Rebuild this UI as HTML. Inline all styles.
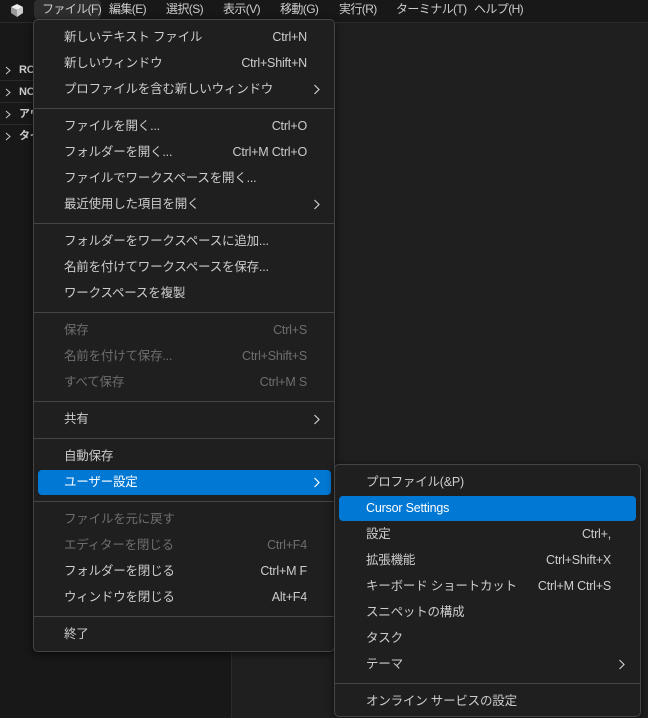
<!DOCTYPE html>
<html><head><meta charset="utf-8"><style>
*{margin:0;padding:0;box-sizing:border-box}
body{width:648px;height:718px;overflow:hidden;background:#1f1f1f;font-family:"Liberation Sans","Noto Sans CJK JP",sans-serif;font-size:12.5px;color:#ccc;position:relative;letter-spacing:-0.2px}
.title{position:absolute;left:0;top:0;width:648px;height:23px;background:#181818;border-bottom:1px solid #2b2b2b}
.tm{position:absolute;top:0;height:19px;line-height:19px;font-size:12px;letter-spacing:-0.6px;color:#ccc;white-space:nowrap}
.side{position:absolute;left:0;top:23px;width:232px;height:695px;background:#181818;border-right:1px solid #2b2b2b}
.sr{position:absolute;left:0;width:232px;height:22px;line-height:22px;font-size:11px;font-weight:bold;color:#ccc;border-bottom:1px solid #2b2b2b;padding-left:19px}
.sr svg{position:absolute;left:5px;top:7px}
.menu{position:absolute;background:#1f1f1f;border:1px solid #454545;border-radius:5px;box-shadow:0 2px 8px rgba(0,0,0,.6)}
.it{position:absolute;height:25px;line-height:25px;border-radius:4px;white-space:nowrap}
.it .l{position:absolute}
.it .r{position:absolute;text-align:right}
.dis{color:#6e6e6e}
.hl{background:#0078d4;color:#fff}
.sep{position:absolute;height:1px;background:#454545}
.ch{position:absolute;top:7px}
</style></head><body>
<div class="title">
<svg style="position:absolute;left:10px;top:4px" width="14" height="13" viewBox="0 0 14 13"><path d="M1 3 L7 0 L13 3 L7 6Z" fill="#eee"/><path d="M1 3 L7 6 L7 13 L1 9Z" fill="#999"/><path d="M13 3 L7 6 L7 13 L13 9Z" fill="#ccc"/></svg>
<div style="position:absolute;left:34px;top:0;width:67px;height:19px;background:#2e2e2e;border-radius:4px"></div>
<div class="tm" style="left:42px">ファイル(F)</div>
<div class="tm" style="left:109px">編集(E)</div>
<div class="tm" style="left:166px">選択(S)</div>
<div class="tm" style="left:223px">表示(V)</div>
<div class="tm" style="left:280px">移動(G)</div>
<div class="tm" style="left:339px">実行(R)</div>
<div class="tm" style="left:396px">ターミナル(T)</div>
<div class="tm" style="left:474px">ヘルプ(H)</div>
</div>
<div class="side">
<div class="sr" style="top:36px"><svg width="6" height="9"><path d="M1 1 L5 4.5 L1 8" stroke="#ccc" fill="none"/></svg>RO</div>
<div class="sr" style="top:58px"><svg width="6" height="9"><path d="M1 1 L5 4.5 L1 8" stroke="#ccc" fill="none"/></svg>NO</div>
<div class="sr" style="top:80px"><svg width="6" height="9"><path d="M1 1 L5 4.5 L1 8" stroke="#ccc" fill="none"/></svg>アウ</div>
<div class="sr" style="top:102px;border:none"><svg width="6" height="9"><path d="M1 1 L5 4.5 L1 8" stroke="#ccc" fill="none"/></svg>タイ</div>
</div>

<div class="menu" style="left:33px;top:19px;width:302px;height:633px">
<div class="it" style="left:4px;top:5px;width:293px"><span class="l" style="left:26px">新しいテキスト ファイル</span><span class="r" style="right:24px">Ctrl+N</span></div>
<div class="it" style="left:4px;top:31px;width:293px"><span class="l" style="left:26px">新しいウィンドウ</span><span class="r" style="right:24px">Ctrl+Shift+N</span></div>
<div class="it" style="left:4px;top:57px;width:293px"><span class="l" style="left:26px">プロファイルを含む新しいウィンドウ</span><svg class="ch" style="left:275px" width="7" height="11"><path d="M1.5 1 L6 5.5 L1.5 10" stroke="#ccc" stroke-width="1.2" fill="none"/></svg></div>
<div class="sep" style="left:0;top:88px;width:300px"></div>
<div class="it" style="left:4px;top:94px;width:293px"><span class="l" style="left:26px">ファイルを開く...</span><span class="r" style="right:24px">Ctrl+O</span></div>
<div class="it" style="left:4px;top:120px;width:293px"><span class="l" style="left:26px">フォルダーを開く...</span><span class="r" style="right:24px">Ctrl+M Ctrl+O</span></div>
<div class="it" style="left:4px;top:146px;width:293px"><span class="l" style="left:26px">ファイルでワークスペースを開く...</span></div>
<div class="it" style="left:4px;top:172px;width:293px"><span class="l" style="left:26px">最近使用した項目を開く</span><svg class="ch" style="left:275px" width="7" height="11"><path d="M1.5 1 L6 5.5 L1.5 10" stroke="#ccc" stroke-width="1.2" fill="none"/></svg></div>
<div class="sep" style="left:0;top:203px;width:300px"></div>
<div class="it" style="left:4px;top:209px;width:293px"><span class="l" style="left:26px">フォルダーをワークスペースに追加...</span></div>
<div class="it" style="left:4px;top:235px;width:293px"><span class="l" style="left:26px">名前を付けてワークスペースを保存...</span></div>
<div class="it" style="left:4px;top:261px;width:293px"><span class="l" style="left:26px">ワークスペースを複製</span></div>
<div class="sep" style="left:0;top:292px;width:300px"></div>
<div class="it dis" style="left:4px;top:298px;width:293px"><span class="l" style="left:26px">保存</span><span class="r" style="right:24px">Ctrl+S</span></div>
<div class="it dis" style="left:4px;top:324px;width:293px"><span class="l" style="left:26px">名前を付けて保存...</span><span class="r" style="right:24px">Ctrl+Shift+S</span></div>
<div class="it dis" style="left:4px;top:350px;width:293px"><span class="l" style="left:26px">すべて保存</span><span class="r" style="right:24px">Ctrl+M S</span></div>
<div class="sep" style="left:0;top:381px;width:300px"></div>
<div class="it" style="left:4px;top:387px;width:293px"><span class="l" style="left:26px">共有</span><svg class="ch" style="left:275px" width="7" height="11"><path d="M1.5 1 L6 5.5 L1.5 10" stroke="#ccc" stroke-width="1.2" fill="none"/></svg></div>
<div class="sep" style="left:0;top:418px;width:300px"></div>
<div class="it" style="left:4px;top:424px;width:293px"><span class="l" style="left:26px">自動保存</span></div>
<div class="it hl" style="left:4px;top:450px;width:293px"><span class="l" style="left:26px">ユーザー設定</span><svg class="ch" style="left:275px" width="7" height="11"><path d="M1.5 1 L6 5.5 L1.5 10" stroke="#fff" stroke-width="1.2" fill="none"/></svg></div>
<div class="sep" style="left:0;top:481px;width:300px"></div>
<div class="it dis" style="left:4px;top:487px;width:293px"><span class="l" style="left:26px">ファイルを元に戻す</span></div>
<div class="it dis" style="left:4px;top:513px;width:293px"><span class="l" style="left:26px">エディターを閉じる</span><span class="r" style="right:24px">Ctrl+F4</span></div>
<div class="it" style="left:4px;top:539px;width:293px"><span class="l" style="left:26px">フォルダーを閉じる</span><span class="r" style="right:24px">Ctrl+M F</span></div>
<div class="it" style="left:4px;top:565px;width:293px"><span class="l" style="left:26px">ウィンドウを閉じる</span><span class="r" style="right:24px">Alt+F4</span></div>
<div class="sep" style="left:0;top:596px;width:300px"></div>
<div class="it" style="left:4px;top:602px;width:293px"><span class="l" style="left:26px">終了</span></div>
</div>

<div class="menu" style="left:334px;top:464px;width:307px;height:253px">
<div class="it" style="left:4px;top:5px;width:297px"><span class="l" style="left:27px">プロファイル(&amp;P)</span></div>
<div class="it hl" style="left:4px;top:31px;width:297px"><span class="l" style="left:27px">Cursor Settings</span></div>
<div class="it" style="left:4px;top:57px;width:297px"><span class="l" style="left:27px">設定</span><span class="r" style="right:25px">Ctrl+,</span></div>
<div class="it" style="left:4px;top:83px;width:297px"><span class="l" style="left:27px">拡張機能</span><span class="r" style="right:25px">Ctrl+Shift+X</span></div>
<div class="it" style="left:4px;top:109px;width:297px"><span class="l" style="left:27px">キーボード ショートカット</span><span class="r" style="right:25px">Ctrl+M Ctrl+S</span></div>
<div class="it" style="left:4px;top:135px;width:297px"><span class="l" style="left:27px">スニペットの構成</span></div>
<div class="it" style="left:4px;top:161px;width:297px"><span class="l" style="left:27px">タスク</span></div>
<div class="it" style="left:4px;top:187px;width:297px"><span class="l" style="left:27px">テーマ</span><svg class="ch" style="left:279px" width="7" height="11"><path d="M1.5 1 L6 5.5 L1.5 10" stroke="#ccc" stroke-width="1.2" fill="none"/></svg></div>
<div class="sep" style="left:0;top:218px;width:305px"></div>
<div class="it" style="left:4px;top:224px;width:297px"><span class="l" style="left:27px">オンライン サービスの設定</span></div>
</div>
</body></html>
